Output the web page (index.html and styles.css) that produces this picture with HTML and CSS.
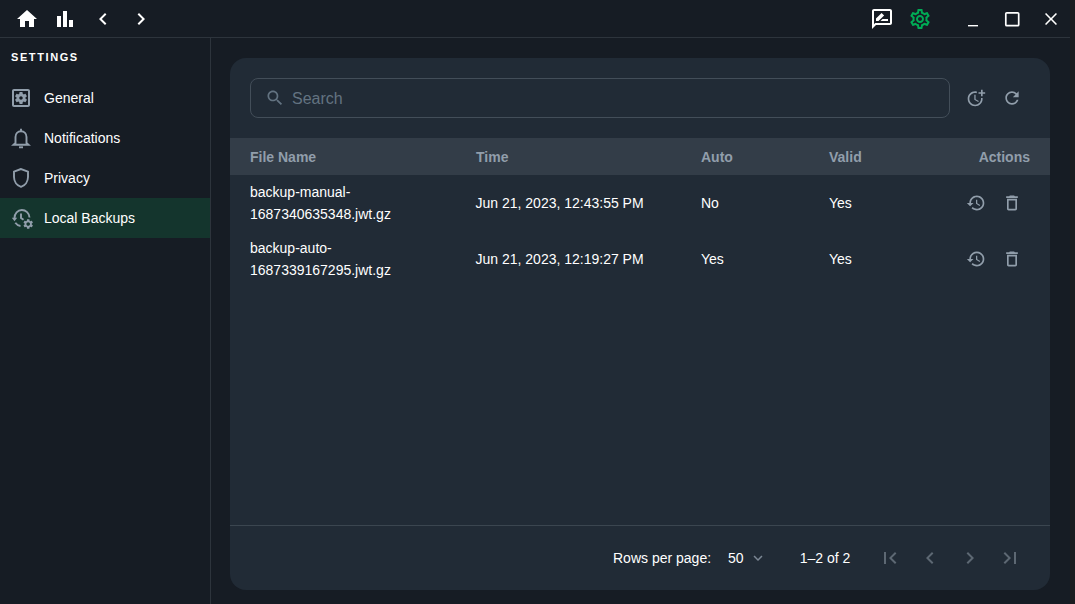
FILE: index.html
```html
<!DOCTYPE html>
<html>
<head>
<meta charset="UTF-8">
<title>Settings - Local Backups</title>
<link rel="stylesheet" href="styles.css">
</head>
<body>

<div class="app">
  <div class="titlebar">
    <div class="nav-icons">
      <svg class="icon" viewBox="0 0 24 24"><path d="M10 20v-6h4v6h5v-8h3L12 3 2 12h3v8z"/></svg>
      <svg class="icon" viewBox="0 0 24 24"><path d="M4 9h4v11H4zm12 4h4v7h-4zm-6-9h4v16h-4z"/></svg>
      <svg class="icon" viewBox="0 0 24 24"><path d="M15.41 7.41L14 6l-6 6 6 6 1.41-1.41L10.83 12z"/></svg>
      <svg class="icon" viewBox="0 0 24 24"><path d="M10 6L8.59 7.41 13.17 12l-4.58 4.59L10 18l6-6z"/></svg>
    </div>
    <div class="nav-icons">
      <svg class="icon" viewBox="0 0 24 24"><path d="M20 2H4c-1.1 0-2 .9-2 2v18l4-4h14c1.1 0 2-.9 2-2V4c0-1.1-.9-2-2-2zm0 14H5.17L4 17.17V4h16v12zM6 14h2.5l5.6-5.6-2.5-2.5L6 11.5zM18 14h-7.5l2-2H18z"/></svg>
      <svg class="icon icon-green" viewBox="0 0 24 24"><path d="M19.43 12.98c.04-.32.07-.64.07-.98 0-.34-.03-.66-.07-.98l2.11-1.65c.19-.15.24-.42.12-.64l-2-3.46c-.09-.16-.26-.25-.44-.25-.06 0-.12.01-.17.03l-2.49 1c-.52-.4-1.08-.73-1.69-.98l-.38-2.65C14.46 2.18 14.25 2 14 2h-4c-.25 0-.46.18-.49.42l-.38 2.65c-.61.25-1.17.59-1.69.98l-2.49-1c-.06-.02-.12-.03-.18-.03-.17 0-.34.09-.43.25l-2 3.46c-.13.22-.07.49.12.64l2.11 1.65c-.04.32-.07.65-.07.98 0 .33.03.66.07.98l-2.11 1.65c-.19.15-.24.42-.12.64l2 3.46c.09.16.26.25.44.25.06 0 .12-.01.17-.03l2.49-1c.52.4 1.08.73 1.69.98l.38 2.65c.03.24.24.42.49.42h4c.25 0 .46-.18.49-.42l.38-2.65c.61-.25 1.17-.59 1.69-.98l2.49 1c.06.02.12.03.18.03.17 0 .34-.09.43-.25l2-3.46c.12-.22.07-.49-.12-.64l-2.11-1.65zm-1.98-1.71c.04.31.05.52.05.73 0 .21-.02.43-.05.73l-.14 1.13.89.7 1.08.84-.7 1.21-1.27-.51-1.04-.42-.9.68c-.43.32-.84.56-1.25.73l-1.06.43-.16 1.13-.2 1.35h-1.4l-.19-1.35-.16-1.13-1.06-.43c-.43-.18-.83-.41-1.23-.71l-.91-.7-1.06.43-1.27.51-.7-1.21 1.08-.84.89-.7-.14-1.13c-.03-.31-.05-.54-.05-.74s.02-.43.05-.73l.14-1.13-.89-.7-1.08-.84.7-1.21 1.27.51 1.04.42.9-.68c.43-.32.84-.56 1.25-.73l1.06-.43.16-1.13.2-1.35h1.39l.19 1.35.16 1.13 1.06.43c.43.18.83.41 1.23.71l.91.7 1.06-.43 1.27-.51.7 1.21-1.07.85-.89.7.14 1.13zM12 8c-2.21 0-4 1.79-4 4s1.79 4 4 4 4-1.79 4-4-1.79-4-4-4zm0 6c-1.1 0-2-.9-2-2s.9-2 2-2 2 .9 2 2-.9 2-2 2z"/></svg>
      <div class="window-btns">
        <svg class="icon" viewBox="0 0 24 24"><path d="M7 18h10v1.4H7z"/></svg>
        <svg class="icon" viewBox="0 0 24 24"><rect class="win-square" x="5.8" y="5.8" width="12.9" height="12.9" rx="1"/></svg>
        <svg class="icon" viewBox="0 0 24 24"><path d="M18 7.1L16.9 6 12 10.9 7.1 6 6 7.1 10.9 12 6 16.9 7.1 18 12 13.1 16.9 18 18 16.9 13.1 12z"/></svg>
      </div>
    </div>
  </div>

  <div class="content">
    <div class="sidebar">
      <div class="sidebar-title">SETTINGS</div>
      <div class="menu-item">
        <svg class="icon icon-grey" viewBox="0 0 24 24"><path d="M6.21 13.97l1.2 2.07c.08.13.23.18.37.13l1.49-.6c.31.24.64.44 1.01.59l.22 1.59c.03.14.15.25.3.25h2.4c.15 0 .27-.11.3-.25l.22-1.59c.36-.15.7-.35 1.01-.59l1.49.6c.14.05.29 0 .37-.13l1.2-2.07c.08-.13.04-.29-.07-.39l-1.27-.99c.03-.19.04-.39.04-.58 0-.2-.02-.39-.04-.59l1.27-.99c.11-.09.15-.26.07-.39l-1.2-2.07c-.08-.13-.23-.18-.37-.13l-1.49.6c-.31-.24-.64-.44-1.01-.59l-.22-1.59c-.03-.14-.15-.25-.3-.25h-2.4c-.15 0-.27.11-.3.25l-.22 1.59c-.36.15-.71.34-1.01.58l-1.49-.6c-.14-.05-.29 0-.37.13l-1.2 2.07c-.08.13-.04.29.07.39l1.27.99c-.03.2-.05.39-.05.59 0 .2.02.39.04.59l-1.27.99c-.11.1-.14.26-.06.39zM12 10.29c.94 0 1.71.77 1.71 1.71s-.77 1.71-1.71 1.71-1.71-.77-1.71-1.71.77-1.71 1.71-1.71zM19 3H5c-1.11 0-2 .9-2 2v14c0 1.1.89 2 2 2h14c1.11 0 2-.9 2-2V5c0-1.1-.89-2-2-2zm0 16H5V5h14v14z"/></svg>
        <span>General</span>
      </div>
      <div class="menu-item">
        <svg class="icon line-icon" viewBox="0 0 24 24">
          <path d="M6.5 17v-6c0-3.300 2.300-5.700 5.500-5.700s5.500 2.400 5.500 5.700v6l2 1.800h-15z"/>
          <path d="M12 5V2.800"/>
          <path d="M10 21.300h4"/>
        </svg>
        <span>Notifications</span>
      </div>
      <div class="menu-item">
        <svg class="icon line-icon" viewBox="0 0 24 24"><path d="M12 3 5 5.700v5.400c0 4.500 2.900 8.500 7 9.800 4.100-1.300 7-5.300 7-9.800V5.700z"/></svg>
        <span>Privacy</span>
      </div>
      <div class="menu-item active">
        <svg class="icon" viewBox="0 0 24 24">
          <g class="line-icon">
            <path d="M20.500 11.500C20.300 7.100 16.800 4 12.800 4 8.700 4 5.500 7.400 5.500 12v1"/>
            <path d="M6.300 16.800c1.300 1.800 2.900 3 5.200 3.200"/>
            <path d="M12 7.500V12l2.500 1.800"/>
          </g>
          <path class="icon-grey" d="M2.800 11.800h5.400l-2.700 3.500z"/>
          <path class="icon-grey" transform="translate(13.200 12) scale(.5)" d="M19.140 12.940c.04-.3.06-.61.06-.94 0-.32-.02-.64-.07-.94l2.030-1.580c.18-.14.23-.41.12-.61l-1.920-3.320c-.12-.22-.37-.29-.59-.22l-2.390.96c-.5-.38-1.030-.7-1.620-.94l-.36-2.540c-.04-.24-.24-.41-.48-.41h-3.840c-.24 0-.43.17-.47.41l-.36 2.540c-.59.24-1.130.57-1.620.94l-2.390-.96c-.22-.08-.47 0-.59.22L2.740 8.870c-.12.21-.08.47.12.61l2.030 1.580c-.05.3-.09.63-.09.94s.02.64.07.94l-2.030 1.580c-.18.14-.23.41-.12.61l1.920 3.320c.12.22.37.29.59.22l2.390-.96c.5.38 1.030.7 1.620.94l.36 2.540c.05.24.24.41.48.41h3.840c.24 0 .44-.17.47-.41l.36-2.540c.59-.24 1.130-.56 1.620-.94l2.390.96c.22.08.47 0 .59-.22l1.920-3.320c.12-.22.07-.47-.12-.61l-2.010-1.580zM12 15.600c-1.980 0-3.600-1.620-3.600-3.600s1.620-3.600 3.600-3.600 3.600 1.620 3.600 3.600-1.620 3.600-3.600 3.600z"/>
        </svg>
        <span>Local Backups</span>
      </div>
    </div>

    <div class="main">
      <div class="card">
        <div class="toolbar">
          <div class="search-box">
            <svg class="search-icon" viewBox="0 0 24 24"><path d="M15.500 14h-.79l-.28-.27C15.410 12.590 16 11.110 16 9.500 16 5.910 13.090 3 9.500 3S3 5.910 3 9.500 5.910 16 9.500 16c1.610 0 3.090-.59 4.230-1.570l.27.28v.79l5 4.990L20.490 19l-4.990-5zm-6 0C7.010 14 5 11.990 5 9.500S7.010 5 9.500 5 14 7.010 14 9.500 11.990 14 9.500 14z"/></svg>
            <input class="search-input" type="text" placeholder="Search">
          </div>
          <div class="actions">
            <div class="icon-btn"><svg class="btn-icon" viewBox="0 0 24 24"><path d="M10 8v6l4.700 2.900.7-1.200-3.900-2.300V8z"/><path d="M17.920 12c.05.33.08.66.08 1 0 3.900-3.100 7-7 7s-7-3.100-7-7 3.100-7 7-7c.7 0 1.370.1 2 .29V4.230c-.64-.15-1.310-.23-2-.23-5 0-9 4-9 9s4 9 9 9 9-4 9-9c0-.34-.02-.67-.06-1h-2.020z"/><path d="M20 5V2h-2v3h-3v2h3v3h2V7h3V5z"/></svg></div>
            <div class="icon-btn"><svg class="btn-icon" viewBox="0 0 24 24"><path d="M17.650 6.350C16.200 4.900 14.210 4 12 4c-4.420 0-7.990 3.580-7.990 8s3.570 8 7.990 8c3.730 0 6.840-2.550 7.730-6h-2.080c-.82 2.330-3.040 4-5.650 4-3.310 0-6-2.690-6-6s2.690-6 6-6c1.660 0 3.140.69 4.220 1.780L13 11h7V4l-2.350 2.350z"/></svg></div>
          </div>
        </div>

        <div class="table-wrap">
          <table>
            <thead>
              <tr>
                <th class="col-name">File Name</th>
                <th class="col-time">Time</th>
                <th class="col-auto">Auto</th>
                <th class="col-valid">Valid</th>
                <th class="col-actions">Actions</th>
              </tr>
            </thead>
            <tbody>
              <tr>
                <td>backup-manual-1687340635348.jwt.gz</td>
                <td class="cell-time">Jun 21, 2023, 12:43:55 PM</td>
                <td>No</td>
                <td>Yes</td>
                <td class="col-actions">
                  <div class="actions row-actions">
                    <div class="icon-btn"><svg class="btn-icon" viewBox="0 0 24 24"><path d="M13 3c-4.970 0-9 4.030-9 9H1l3.890 3.890.07.14L9 12H6c0-3.870 3.130-7 7-7s7 3.130 7 7-3.130 7-7 7c-1.930 0-3.680-.79-4.940-2.060l-1.420 1.420C8.270 19.990 10.510 21 13 21c4.970 0 9-4.030 9-9s-4.030-9-9-9zm-1 5v5l4.280 2.540.72-1.210-3.500-2.080V8H12z"/></svg></div>
                    <div class="icon-btn"><svg class="btn-icon" viewBox="0 0 24 24"><path d="M6 19c0 1.100.9 2 2 2h8c1.100 0 2-.9 2-2V7H6v12zM8 9h8v10H8V9zm7.500-5l-1-1h-5l-1 1H5v2h14V4z"/></svg></div>
                  </div>
                </td>
              </tr>
              <tr>
                <td>backup-auto-1687339167295.jwt.gz</td>
                <td class="cell-time">Jun 21, 2023, 12:19:27 PM</td>
                <td>Yes</td>
                <td>Yes</td>
                <td class="col-actions">
                  <div class="actions row-actions">
                    <div class="icon-btn"><svg class="btn-icon" viewBox="0 0 24 24"><path d="M13 3c-4.970 0-9 4.030-9 9H1l3.890 3.890.07.14L9 12H6c0-3.870 3.130-7 7-7s7 3.130 7 7-3.130 7-7 7c-1.930 0-3.680-.79-4.940-2.060l-1.420 1.420C8.270 19.990 10.510 21 13 21c4.970 0 9-4.030 9-9s-4.030-9-9-9zm-1 5v5l4.280 2.540.72-1.210-3.500-2.080V8H12z"/></svg></div>
                    <div class="icon-btn"><svg class="btn-icon" viewBox="0 0 24 24"><path d="M6 19c0 1.100.9 2 2 2h8c1.100 0 2-.9 2-2V7H6v12zM8 9h8v10H8V9zm7.500-5l-1-1h-5l-1 1H5v2h14V4z"/></svg></div>
                  </div>
                </td>
              </tr>
            </tbody>
          </table>
        </div>

        <div class="pagination">
          <span class="rows-label">Rows per page:</span>
          <div class="rows-select">
            <span>50</span>
            <svg class="select-arrow" viewBox="0 0 24 24"><path d="M16.590 8.590L12 13.170 7.410 8.590 6 10l6 6 6-6z"/></svg>
          </div>
          <span class="page-info">1–2 of 2</span>
          <div class="page-btns">
            <svg class="icon icon-off" viewBox="0 0 24 24"><path d="M18.410 16.590L13.820 12l4.590-4.590L17 6l-6 6 6 6zM6 6h2v12H6z"/></svg>
            <svg class="icon icon-off" viewBox="0 0 24 24"><path d="M15.410 7.410L14 6l-6 6 6 6 1.410-1.410L10.830 12z"/></svg>
            <svg class="icon icon-off" viewBox="0 0 24 24"><path d="M10 6L8.590 7.410 13.170 12l-4.580 4.590L10 18l6-6z"/></svg>
            <svg class="icon icon-off" viewBox="0 0 24 24"><path d="M5.590 7.410L10.180 12l-4.590 4.590L7 18l6-6-6-6zM16 6h2v12h-2z"/></svg>
          </div>
        </div>
      </div>
    </div>
  </div>
</div>

</body>
</html>
```

FILE: styles.css
```css
* {
  box-sizing: border-box;
}
body {
  margin: 0;
  background-color: #1b1e21;
  color: #fff;
  font-family: "Liberation Sans", Arial, sans-serif;
  font-size: 14px;
}
.app {
  display: flex;
  flex-direction: column;
  width: 1070px;
  height: 100vh;
  overflow: hidden;
  background-color: #161c24;
}

/* top bar */
.titlebar {
  display: flex;
  justify-content: space-between;
  align-items: center;
  height: 38px;
  flex-shrink: 0;
  padding-left: 15px;
  border-bottom: 1px solid #2d343c;
}
.nav-icons {
  display: flex;
  align-items: center;
  gap: 14px;
}
.icon {
  display: block;
  width: 24px;
  height: 24px;
  flex-shrink: 0;
  fill: #fff;
}
.icon-green {
  fill: #00ab55;
}
.icon-grey {
  fill: #919eab;
}
.icon-off {
  fill: #5d6873;
}
.line-icon {
  fill: none;
  stroke: #919eab;
  stroke-width: 1.9;
}
.win-square {
  fill: none;
  stroke: #fff;
  stroke-width: 1.7;
}
.window-btns {
  display: flex;
  margin-left: 15px;
  padding-right: 7px;
  gap: 15px;
}

/* sidebar */
.content {
  display: flex;
  flex: 1;
  min-height: 0;
}
.sidebar {
  width: 211px;
  flex-shrink: 0;
  border-right: 1px solid #2d343c;
}
.sidebar-title {
  height: 40px;
  padding: 12px 0 0 11px;
  font-size: 11px;
  font-weight: bold;
  letter-spacing: 1.6px;
  line-height: 14px;
}
.menu-item {
  display: flex;
  align-items: center;
  gap: 11px;
  height: 40px;
  padding-left: 9px;
}
.menu-item.active {
  background-color: #14352d;
}

/* card */
.main {
  flex: 1;
  display: flex;
  padding: 20px 20px 14px 19px;
}
.card {
  display: flex;
  flex-direction: column;
  width: 100%;
  background-color: #212b36;
  border-radius: 16px;
  overflow: hidden;
}
.toolbar {
  display: flex;
  align-items: center;
  gap: 8px;
  padding: 20px 20px;
}
.search-box {
  display: flex;
  align-items: center;
  flex: 1;
  height: 40px;
  padding-left: 14px;
  border: 1px solid #434e59;
  border-radius: 8px;
}
.search-icon {
  width: 20px;
  height: 20px;
  fill: #637381;
}
.search-input {
  flex: 1;
  margin-left: 7px;
  border: none;
  outline: none;
  padding: 2px 0 0;
  background: transparent;
  color: #fff;
  font-family: "Liberation Sans", Arial, sans-serif;
  font-size: 16px;
}
.search-input::placeholder {
  color: #637381;
  opacity: 1;
}
.actions {
  display: flex;
}
.icon-btn {
  display: flex;
  align-items: center;
  justify-content: center;
  width: 36px;
  height: 36px;
}
.btn-icon {
  display: block;
  width: 20px;
  height: 20px;
  fill: #919eab;
}

/* table */
.table-wrap {
  flex: 1;
}
table {
  border-collapse: collapse;
  table-layout: fixed;
  width: 100%;
}
th {
  height: 37px;
  padding: 0 20px;
  background-color: #333d48;
  color: #919eab;
  font-weight: bold;
  text-align: left;
}
td {
  height: 56px;
  padding: 6px 20px;
  line-height: 22px;
}
td.cell-time {
  padding-left: 19.5px;
}
.col-name {
  width: 226px;
}
.col-time {
  width: 225px;
}
.col-auto {
  width: 128px;
}
th.col-actions {
  text-align: right;
}
.row-actions {
  justify-content: flex-end;
}

/* footer */
.pagination {
  display: flex;
  align-items: center;
  height: 65px;
  padding-left: 383px;
  border-top: 1px solid #3b4650;
}
.rows-select {
  display: flex;
  align-items: center;
  margin-left: 17px;
  margin-top: -1px;
}
.select-arrow {
  width: 18px;
  height: 18px;
  margin-left: 5px;
  fill: #7b8794;
}
.page-info {
  margin-left: 33px;
}
.page-btns {
  display: flex;
  gap: 16px;
  margin-left: 28px;
}
```
